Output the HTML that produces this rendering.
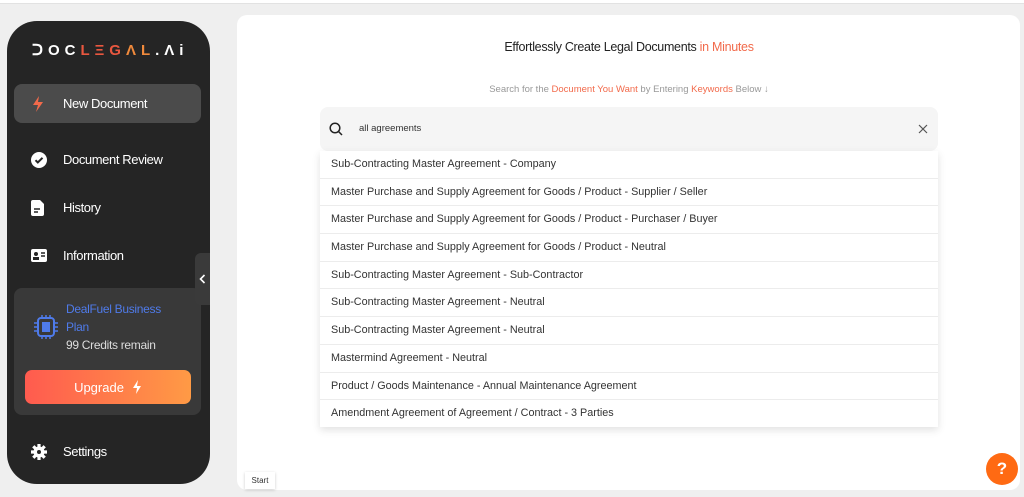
<!DOCTYPE html>
<html><head><meta charset="utf-8"><style>
*{box-sizing:border-box;margin:0;padding:0}
body{width:1024px;height:497px;background:#efefef;font-family:"Liberation Sans",sans-serif;position:relative;overflow:hidden}
.top{position:absolute;left:0;top:0;width:1024px;height:4px;background:#fff;border-bottom:1px solid #e2e2e2}
.side{position:absolute;left:7px;top:21px;width:203px;height:463px;background:#252525;border-radius:30px}
.logo{position:absolute;left:32px;top:41px;font-size:15px;letter-spacing:5px;color:#fff;font-weight:bold}
.nav{position:absolute;left:14px;width:187px;height:39px;color:#fff;font-size:13px;letter-spacing:-0.4px;display:flex;align-items:center}
.nav svg{position:absolute;left:17px}
.nav span{position:absolute;left:49px}
.card{position:absolute;left:14px;top:288px;width:187px;height:127px;background:#393939;border-radius:8px}
.up{position:absolute;left:25px;top:370px;width:166px;height:34px;border-radius:7px;background:linear-gradient(90deg,#ff5b4f,#ff9a45);color:#fff;font-size:13px;display:flex;align-items:center;justify-content:center;gap:8px}
.tab{position:absolute;left:195px;top:253px;width:15px;height:52px;background:#3a3a3a;border-radius:6px 0 0 6px}
.main{position:absolute;left:237px;top:15px;width:783px;height:475px;background:#fff;border-radius:10px}
.h{position:absolute;left:379px;top:40px;width:500px;text-align:center;font-size:12.5px;color:#222;letter-spacing:-0.3px}
.o{color:#f26a4b}
.sub{position:absolute;left:0;top:84px;width:1258px;text-align:center;font-size:9.5px;color:#999}
.search{position:absolute;left:320px;top:107px;width:618px;height:44px;background:#f5f5f5;border-radius:8px}
.list{position:absolute;left:320px;top:151px;width:618px;height:276px;background:#fff;box-shadow:0 3px 8px rgba(0,0,0,.12)}
.row{height:27.7px;border-bottom:1px solid #ececec;font-size:10.8px;color:#333;padding-left:11px;line-height:26px}
.help{position:absolute;left:986px;top:453px;width:32px;height:32px;border-radius:50%;background:#ff6a13;color:#fff;font-size:17px;text-align:center;line-height:32px;font-weight:bold}
.start{position:absolute;left:245px;top:472px;width:30px;height:17px;background:#fff;box-shadow:0 1px 3px rgba(0,0,0,.2);font-size:8px;text-align:center;line-height:17px;color:#333}
</style></head><body>
<div class="top"></div>
<div class="side"></div>
<div class="logo">ᑐOC<span style="color:#e9573f">LΞG</span><span style="color:#f08a3c">ΛL</span>.Λi</div>
<div class="nav" style="top:84px;background:#4b4b4b;border-radius:8px"><svg width="14" height="16" viewBox="0 0 14 16"><path d="M8 0L2 9h5l-2 7 7-10H7z" fill="#f26a4b"/></svg><span>New Document</span></div>
<div class="nav" style="top:140px"><svg width="16" height="16" viewBox="0 0 16 16"><circle cx="8" cy="8" r="8" fill="#fff"/><path d="M4.5 8.2l2.3 2.3 4.7-4.7" stroke="#252525" stroke-width="2" fill="none"/></svg><span>Document Review</span></div>
<div class="nav" style="top:188px"><svg width="14" height="16" viewBox="0 0 14 16"><path d="M2 0h7l4 4v10a2 2 0 0 1-2 2H2a2 2 0 0 1-2-2V2a2 2 0 0 1 2-2z" fill="#fff"/><path d="M3 9h6M3 12h4" stroke="#252525" stroke-width="1.5"/></svg><span>History</span></div>
<div class="nav" style="top:236px"><svg width="16" height="13" viewBox="0 0 16 13"><rect width="16" height="13" rx="2" fill="#fff"/><circle cx="5" cy="5" r="2" fill="#252525"/><rect x="2" y="8" width="6" height="3" fill="#252525"/><path d="M10 4h4M10 7h4" stroke="#252525" stroke-width="1.5"/></svg><span>Information</span></div>
<div class="card"></div>
<svg style="position:absolute;left:33px;top:315px" width="26" height="24" viewBox="0 0 26 24"><rect x="5" y="3" width="16" height="18" rx="3" fill="none" stroke="#4f7bea" stroke-width="2"/><rect x="9" y="7" width="8" height="10" fill="#4f7bea"/><path d="M1 8h4M1 12h4M1 16h4M21 8h4M21 12h4M21 16h4M9 0v3M13 0v3M17 0v3M9 21v3M13 21v3M17 21v3" stroke="#4f7bea" stroke-width="1.5"/></svg>
<div style="position:absolute;left:66px;top:300px;font-size:12px;line-height:18px;color:#4f7bea;letter-spacing:-0.3px">DealFuel Business<br>Plan<br><span style="color:#ddd">99 Credits remain</span></div>
<div class="up">Upgrade <svg width="10" height="14" viewBox="0 0 10 14"><path d="M6 0L1 8h4l-1 6 5-8H5z" fill="#fff"/></svg></div>
<div class="tab"></div>
<svg style="position:absolute;left:199px;top:274px" width="7" height="10" viewBox="0 0 7 10"><path d="M5.5 1L1.5 5l4 4" stroke="#fff" stroke-width="1.6" fill="none"/></svg>
<div class="nav" style="top:432px"><svg width="16" height="16" viewBox="0 0 16 16"><circle cx="8" cy="8" r="5.5" fill="#fff"/><path d="M8 0v16M0 8h16M2.3 2.3l11.4 11.4M13.7 2.3L2.3 13.7" stroke="#fff" stroke-width="3.2"/><circle cx="8" cy="8" r="2" fill="#252525"/></svg><span>Settings</span></div>
<div class="main"></div>
<div class="h">Effortlessly Create Legal Documents <span class="o">in Minutes</span></div>
<div class="sub">Search for the <span class="o">Document You Want</span> by Entering <span class="o">Keywords</span> Below ↓</div>
<div class="search"><svg style="position:absolute;left:9px;top:15px" width="14" height="14" viewBox="0 0 14 14"><circle cx="6" cy="6" r="4.8" stroke="#222" stroke-width="1.5" fill="none"/><path d="M9.5 9.5L13 13" stroke="#222" stroke-width="1.5"/></svg><span style="position:absolute;left:39px;top:16px;font-size:9.5px;color:#333">all agreements</span><svg style="position:absolute;left:598px;top:17px" width="10" height="10" viewBox="0 0 10 10"><path d="M1 1l8 8M9 1L1 9" stroke="#555" stroke-width="1.2"/></svg></div>
<div class="list">
<div class="row">Sub-Contracting Master Agreement - Company</div>
<div class="row">Master Purchase and Supply Agreement for Goods / Product - Supplier / Seller</div>
<div class="row">Master Purchase and Supply Agreement for Goods / Product - Purchaser / Buyer</div>
<div class="row">Master Purchase and Supply Agreement for Goods / Product - Neutral</div>
<div class="row">Sub-Contracting Master Agreement - Sub-Contractor</div>
<div class="row">Sub-Contracting Master Agreement - Neutral</div>
<div class="row">Sub-Contracting Master Agreement - Neutral</div>
<div class="row">Mastermind Agreement - Neutral</div>
<div class="row">Product / Goods Maintenance - Annual Maintenance Agreement</div>
<div class="row" style="border:0">Amendment Agreement of Agreement / Contract - 3 Parties</div>
</div>
<div class="start">Start</div>
<div class="help">?</div>
</body></html>
